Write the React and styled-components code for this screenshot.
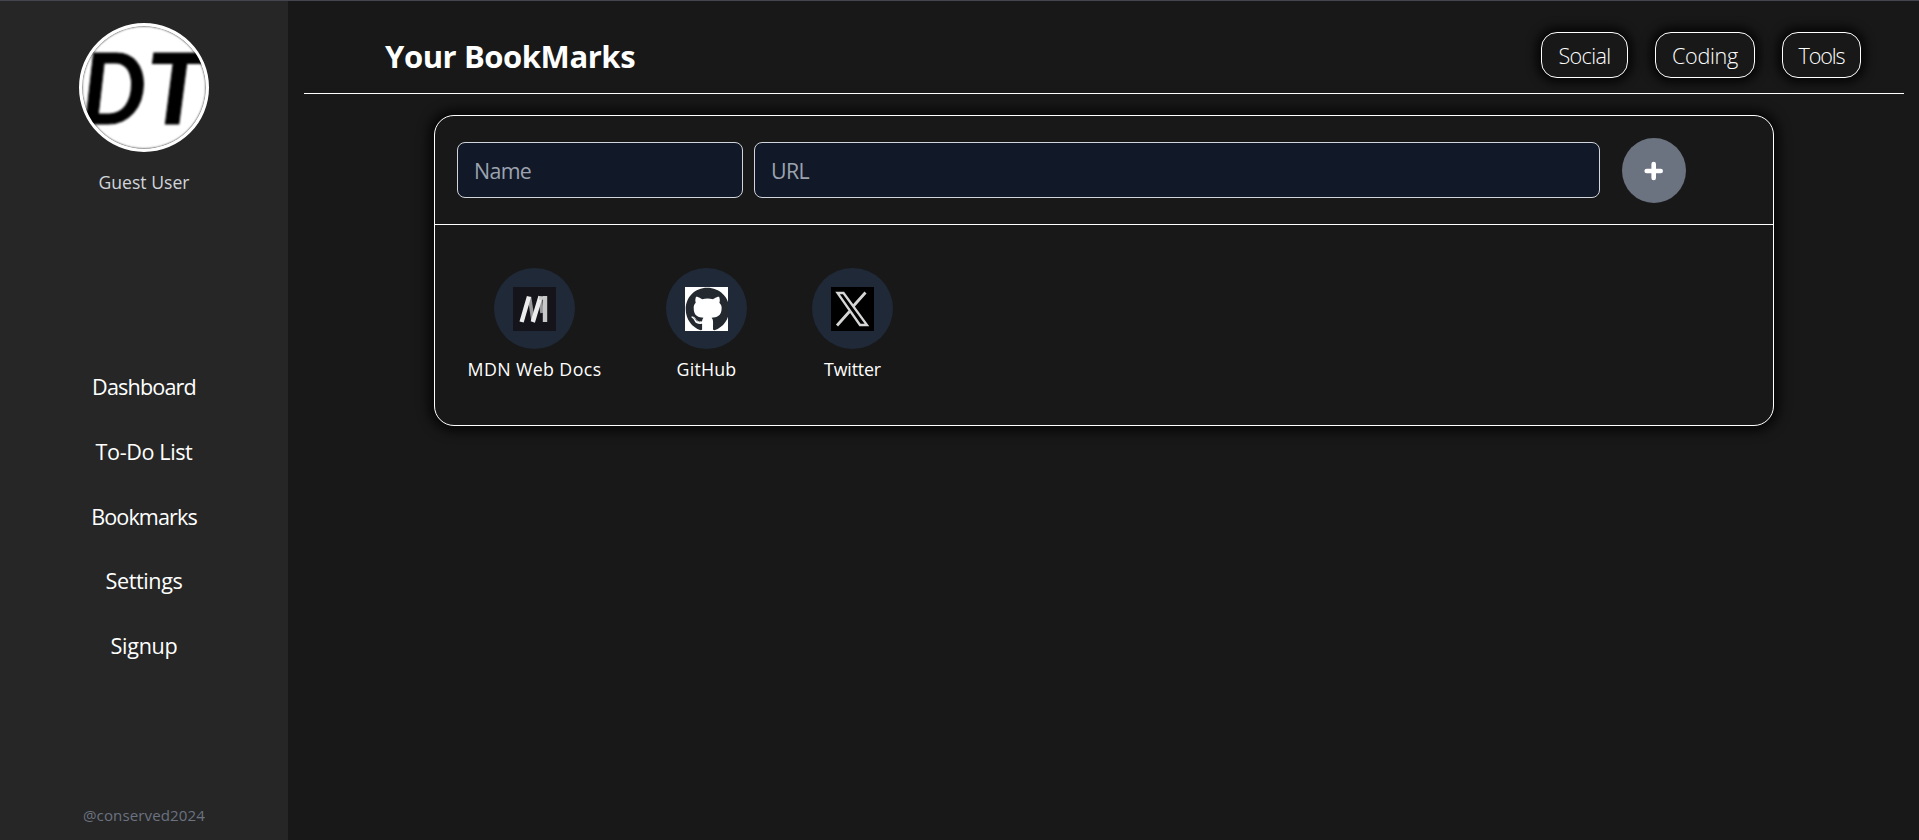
import React from "react";
import styled, { createGlobalStyle } from "styled-components";
import { FaGithub } from "react-icons/fa6";

const GlobalStyle = createGlobalStyle`
  *, *::before, *::after { box-sizing: border-box; }
  body {
    margin: 0;
    background: #181818;
    color: #fff;
    font-family: "Segoe UI", "Open Sans", "Noto Sans", sans-serif;
    overflow: hidden;
  }
  p, h1 { margin: 0; }
`;

const Page = styled.div`
  display: flex;
  height: 840px;
  border-top: 1px solid #45454f;
`;

const Sidebar = styled.aside`
  display: flex;
  flex-direction: column;
  align-items: center;
  width: 288px;
  flex: none;
  padding: 22px 0 11px;
  background: #262626;
`;

const Avatar = styled.div`
  width: 130px;
  height: 129px;
  border: 3px solid #fff;
  border-radius: 50%;
  overflow: hidden;
  background: #fff;
  box-shadow: inset 0 0 2px 0.5px #555;
  svg { display: block; width: 100%; height: 100%; }
`;

const UserName = styled.p`
  margin-top: 18px;
  font-size: 17.6px;
  line-height: 24px;
  color: #d1d5db;
`;

const Nav = styled.nav`
  display: flex;
  flex-direction: column;
  align-items: center;
  gap: 32.8px;
  margin-top: 177px;
`;

const NavLink = styled.a`
  font-size: 21.6px;
  line-height: 32px;
  letter-spacing: ${(p) => p.$track}px;
  white-space: nowrap;
`;

const Copyright = styled.p`
  margin-top: auto;
  font-size: 15.1px;
  line-height: 28px;
  letter-spacing: 0.1px;
  color: #6b7280;
`;

const Main = styled.main`
  flex: 1;
  padding: 0 15px 0 16px;
`;

const Header = styled.header`
  display: flex;
  justify-content: space-between;
  align-items: center;
  height: 93px;
  padding: 16px 43px 0 81px;
  border-bottom: 1px solid #fff;
`;

const Title = styled.h1`
  margin-top: 1px;
  font-size: 31px;
  line-height: 44px;
  font-weight: 700;
  letter-spacing: -0.43px;
`;

const Categories = styled.div`
  display: flex;
  gap: 27px;
  margin-top: -1px;
`;

const Category = styled.button`
  width: ${(p) => p.$width}px;
  height: 46px;
  padding: 2px 0 0;
  border: 1px solid #fff;
  border-radius: 16px;
  background: #181818;
  box-shadow: 0 0 10px 5px rgba(0, 0, 0, 0.75);
  color: #fff;
  font: 300 21.6px/42px "Segoe UI", "Open Sans", "Noto Sans", sans-serif;
  letter-spacing: ${(p) => p.$track}px;
`;

const Card = styled.section`
  width: 1340px;
  height: 311px;
  margin: 21px 0 0 130px;
  border: 1px solid #fff;
  border-radius: 20px;
  box-shadow: 0 0 12px 5px rgba(0, 0, 0, 0.8);
`;

const AddForm = styled.form`
  display: flex;
  align-items: center;
  height: 109px;
  padding-left: 22px;
  border-bottom: 1px solid #fff;
`;

const Field = styled.input`
  width: ${(p) => p.$width}px;
  height: 56px;
  margin-right: ${(p) => p.$after}px;
  padding: 0 16px;
  border: 1px solid #d1d5db;
  border-radius: 8px;
  background: #111827;
  font: 400 21.4px "Segoe UI", "Open Sans", "Noto Sans", sans-serif;
  letter-spacing: -0.65px;
  &::placeholder { color: #9ca3af; opacity: 1; }
`;

const AddButton = styled.button`
  display: grid;
  place-items: center;
  width: 64px;
  height: 65px;
  padding: 1px 0 0;
  border: 0;
  border-radius: 50%;
  background: #6b7280;
`;

const Bookmarks = styled.div`
  display: flex;
  gap: 65px;
  padding: 43px 0 0 33px;
`;

const Bookmark = styled.a`
  display: flex;
  flex-direction: column;
  align-items: center;
  width: ${(p) => p.$width}px;
`;

const Disc = styled.span`
  display: grid;
  place-items: center;
  width: 81px;
  height: 81px;
  border-radius: 50%;
  background: #1f2937;
`;

const Favicon = styled.span`
  display: grid;
  place-items: center;
  width: 43px;
  height: 44px;
  background: ${(p) => p.$bg};
  overflow: hidden;
  svg { display: block; filter: blur(0.7px); }
`;

const Label = styled.span`
  margin-top: 6px;
  font-size: 17.8px;
  line-height: 28px;
  letter-spacing: ${(p) => p.$track}px;
  white-space: nowrap;
`;

const Monogram = () => (
  <svg viewBox="0 0 124 123">
    <g
      fontFamily="Lato, sans-serif"
      fontStyle="italic"
      fontWeight="700"
      fontSize="98"
      stroke="#000"
      strokeWidth="1"
      style={{ filter: "blur(0.9px)" }}
    >
      <text x="0" y="98" textLength="64" lengthAdjust="spacingAndGlyphs">D</text>
      <text x="65" y="98" textLength="58" lengthAdjust="spacingAndGlyphs">T</text>
    </g>
  </svg>
);

const PlusIcon = () => (
  <svg width="20" height="20" fill="none" stroke="#fff" strokeWidth="4.6" strokeLinecap="round">
    <path d="M9.7 3v14M2.7 10h14" />
  </svg>
);

const MdnMark = () => (
  <svg width="43" height="44" fill="none">
    <path d="M16.5 10 20 33.5M27 10 29 26" stroke="#98989a" strokeWidth="3.6" />
    <path d="M8.6 35 16 9.5M19.8 35 27.5 9.5" stroke="#ececec" strokeWidth="4.4" />
    <path d="M32 9v26" stroke="#c8c8c8" strokeWidth="4.4" />
    <path d="M26 11h8" stroke="#c8c8c8" strokeWidth="3.4" />
  </svg>
);

const XMark = () => (
  <svg width="43" height="44" fill="none" stroke="#d6d6d6" strokeWidth="2.3">
    <path d="M6.5 6h6L36 38h-7Z" />
    <path d="M34.5 5.5 22 19.5M6 38.5 18.5 24.5" strokeWidth="2.8" />
  </svg>
);

const navItems = [
  ["Dashboard", -0.85],
  ["To-Do List", -0.4],
  ["Bookmarks", -0.9],
  ["Settings", -0.4],
  ["Signup", -0.3],
];
const categories = [
  ["Social", 87, -0.65],
  ["Coding", 100, -0.3],
  ["Tools", 79, -1.1],
];
const bookmarks = [
  { name: "MDN Web Docs", width: 133, track: 0.38, bg: "#15141a", icon: <MdnMark /> },
  { name: "GitHub", width: 81, track: 0.2, bg: "#fff", icon: <FaGithub size={45} color="#24292f" /> },
  { name: "Twitter", width: 81, track: -0.15, bg: "#000", icon: <XMark /> },
];

export default function App() {
  return (
    <>
      <GlobalStyle />
      <Page>
        <Sidebar>
          <Avatar><Monogram /></Avatar>
          <UserName>Guest User</UserName>
          <Nav>
            {navItems.map(([name, track]) => (
              <NavLink key={name} $track={track}>{name}</NavLink>
            ))}
          </Nav>
          <Copyright>@conserved2024</Copyright>
        </Sidebar>
        <Main>
          <Header>
            <Title>Your BookMarks</Title>
            <Categories>
              {categories.map(([name, width, track]) => (
                <Category key={name} $width={width} $track={track}>{name}</Category>
              ))}
            </Categories>
          </Header>
          <Card>
            <AddForm>
              <Field placeholder="Name" $width={286} $after={11} />
              <Field placeholder="URL" $width={846} $after={22} />
              <AddButton type="button" aria-label="Add bookmark"><PlusIcon /></AddButton>
            </AddForm>
            <Bookmarks>
              {bookmarks.map((b) => (
                <Bookmark key={b.name} $width={b.width}>
                  <Disc><Favicon $bg={b.bg}>{b.icon}</Favicon></Disc>
                  <Label $track={b.track}>{b.name}</Label>
                </Bookmark>
              ))}
            </Bookmarks>
          </Card>
        </Main>
      </Page>
    </>
  );
}
